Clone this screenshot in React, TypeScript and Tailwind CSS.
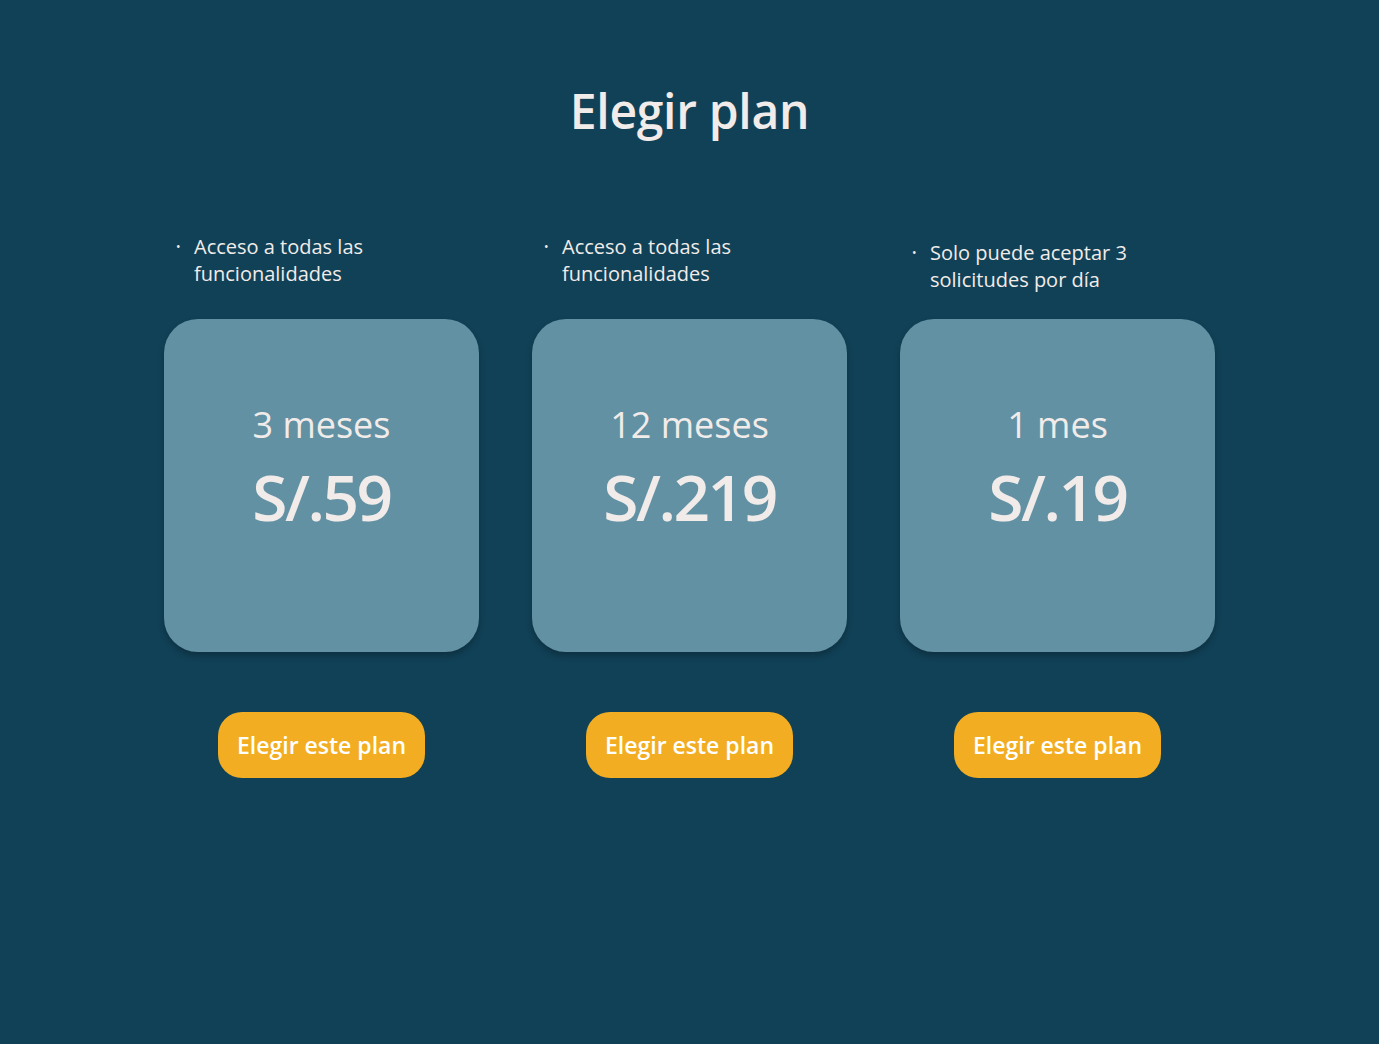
const plans = [
  { features: ['Acceso a todas las funcionalidades'], period: '3 meses', price: 'S/.59', offset: false },
  { features: ['Acceso a todas las funcionalidades'], period: '12 meses', price: 'S/.219', offset: false },
  { features: ['Solo puede aceptar 3 solicitudes por día'], period: '1 mes', price: 'S/.19', offset: true },
];

export default function App() {
  return (
    <div
      className="min-h-screen w-full bg-[#114157] text-[#f1ece9] flex flex-col items-center"
      style={{ fontFamily: '"Open Sans", "Noto Sans", sans-serif' }}
    >
      {/* Title */}
      <h1 className="mt-[81px] text-[48px] leading-[60px] font-semibold tracking-[-0.3px]">Elegir plan</h1>

      {/* Plans */}
      <div className="mt-[92px] w-[1051px] grid grid-cols-3 gap-[53px]">
        {plans.map((plan) => (
          <div key={plan.period} className="flex flex-col items-center">
            <ul className={`self-start pl-[12px] h-[86px] ${plan.offset ? 'pt-[6px]' : ''}`}>
              {plan.features.map((f) => (
                <li key={f} className="flex text-[20px] leading-[27px]">
                  <span className="w-[18px] shrink-0 text-[12px]">•</span>
                  <span className="w-[215px]">{f}</span>
                </li>
              ))}
            </ul>

            <div className="w-[315px] h-[333px] rounded-[34px] bg-[#6391a4] shadow-[0_4px_6px_rgba(0,0,0,0.25)] flex flex-col items-center pt-[82px]">
              <div className="text-[36px] leading-[48px] font-medium">{plan.period}</div>
              <div className="mt-[6px] text-[64px] leading-[84px] font-semibold tracking-[-2.5px]">{plan.price}</div>
            </div>

            <button className="mt-[60px] w-[207px] h-[66px] rounded-[24px] bg-[#f2ad22] text-white text-[23px] font-semibold">
              Elegir este plan
            </button>
          </div>
        ))}
      </div>
    </div>
  );
}
